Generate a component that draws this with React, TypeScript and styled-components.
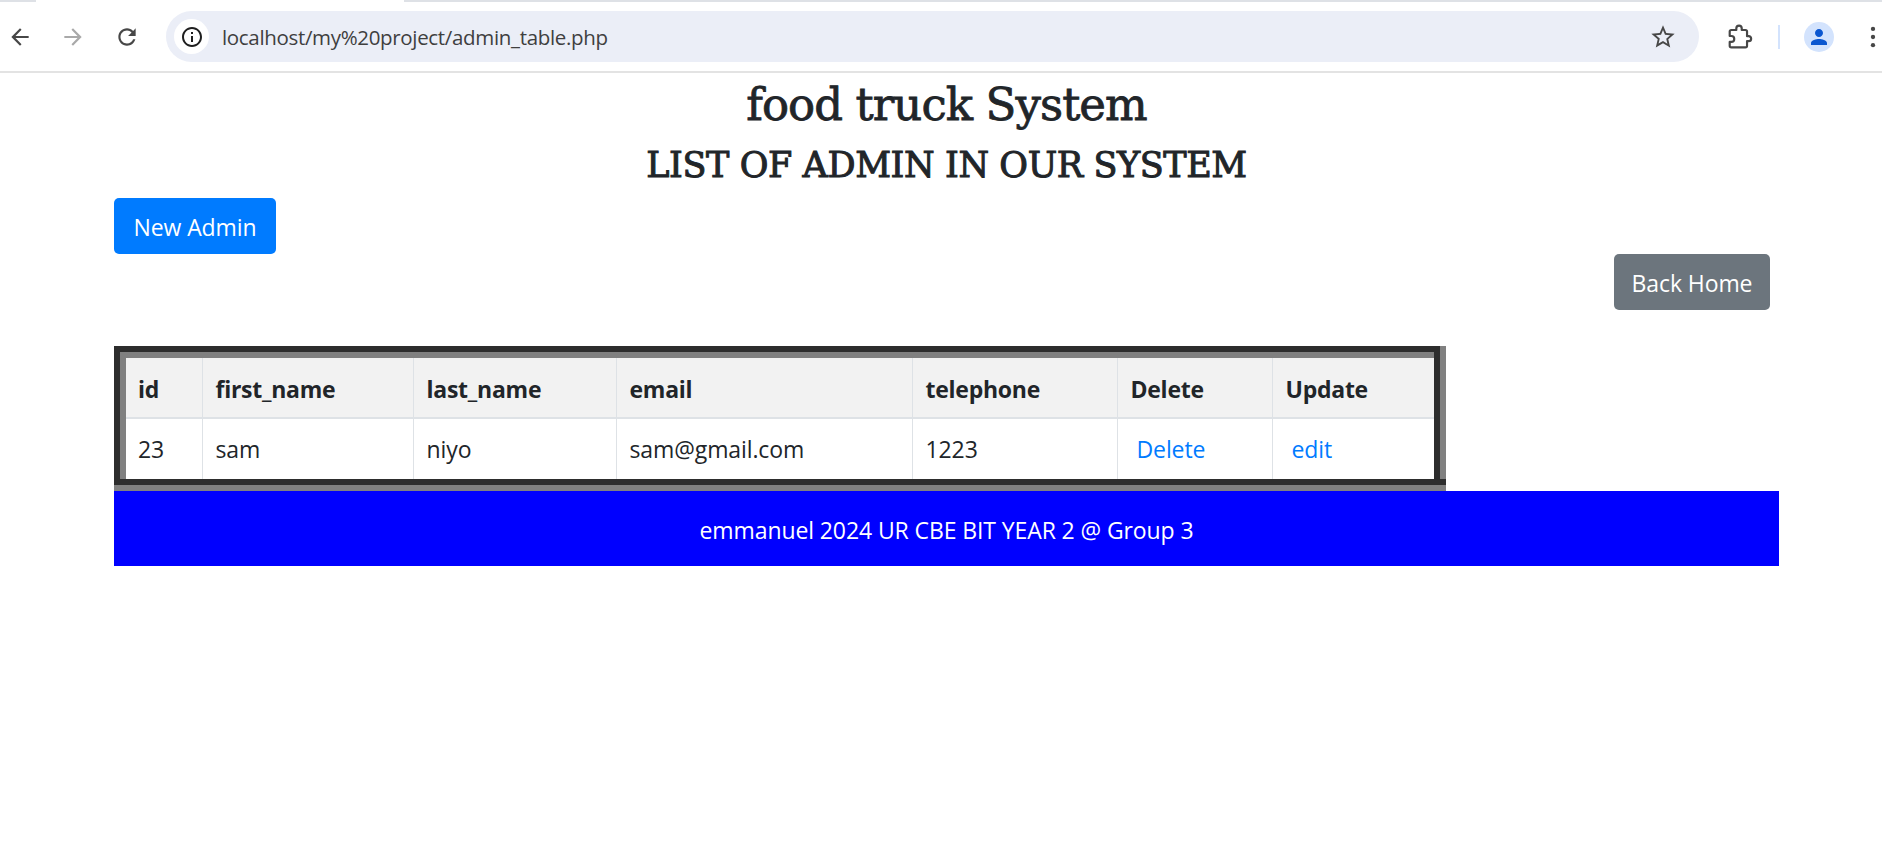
import styled, { createGlobalStyle } from "styled-components";

const GlobalStyle = createGlobalStyle`
  html, body {
    margin: 0;
    padding: 0;
    background: #fff;
    font-family: "Open Sans", "Noto Sans", sans-serif;
    color: #212529;
  }
  * {
    box-sizing: border-box;
  }
`;

const TabStrip = styled.div`
  display: flex;
  height: 2px;
  background: #dee1e6;
`;

const ActiveTab = styled.div`
  width: 368px;
  margin-left: 36px;
  background: #fff;
`;

const Toolbar = styled.div`
  display: flex;
  align-items: center;
  height: 71px;
  padding: 0 0 0 7px;
  overflow: hidden;
  border-bottom: 2px solid #e3e3e3;
`;

const NavIcon = styled.svg<{ $x: number; $color: string }>`
  width: 26px;
  height: 26px;
  flex: none;
  margin-left: ${(props) => props.$x}px;
  fill: ${(props) => props.$color};
`;

const Omnibox = styled.div`
  display: flex;
  align-items: center;
  flex: none;
  width: 1533px;
  height: 51px;
  margin-left: 26px;
  padding: 0 22px 0 8px;
  border-radius: 26px;
  background: #ebeef7;
`;

const InfoBadge = styled.div`
  display: flex;
  align-items: center;
  justify-content: center;
  width: 35px;
  height: 35px;
  flex: none;
  border-radius: 50%;
  background: #fff;
`;

const Url = styled.span`
  flex: 1;
  margin-left: 13px;
  font-size: 20.5px;
  letter-spacing: -0.33px;
  color: #3f3f3f;
`;

const Divider = styled.div`
  width: 2px;
  height: 24px;
  flex: none;
  margin-left: 25px;
  background: #d3e3fd;
`;

const Avatar = styled.div`
  display: flex;
  align-items: center;
  justify-content: center;
  width: 30px;
  height: 30px;
  flex: none;
  margin-left: 24px;
  border-radius: 50%;
  background: #d3e3fd;
`;

const Main = styled.main`
  width: 1665px;
  margin-left: 114px;
`;

const Title = styled.h1`
  margin: 0;
  height: 62px;
  padding-top: 2px;
  font-family: "DejaVu Serif", serif;
  font-weight: 400;
  -webkit-text-stroke: 0.8px #212529;
  font-size: 45px;
  line-height: 60px;
  letter-spacing: -0.9px;
  text-align: center;
`;

const Subtitle = styled.h2`
  margin: 0;
  height: 63px;
  font-family: "DejaVu Serif", serif;
  font-weight: 400;
  -webkit-text-stroke: 1px #212529;
  font-size: 35px;
  line-height: 60px;
  letter-spacing: -0.4px;
  text-align: center;
`;

const ButtonRow = styled.div<{ $end?: boolean }>`
  display: flex;
  justify-content: ${(props) => (props.$end ? "flex-end" : "flex-start")};
  padding-right: ${(props) => (props.$end ? "9px" : "0")};
`;

const Button = styled.a<{ $bg: string; $w: number }>`
  display: flex;
  align-items: center;
  justify-content: center;
  width: ${(props) => props.$w}px;
  height: 56px;
  padding-top: 2px;
  border-radius: 5px;
  background: ${(props) => props.$bg};
  color: #fff;
  font-size: 23px;
  letter-spacing: -0.1px;
`;

const dark = "linear-gradient(#2d2d2d, #2d2d2d)";

const TableFrame = styled.div`
  width: 1332px;
  margin-top: 36px;
  padding: 12px;
  background:
    ${dark} left 0 bottom 6px / 100% 6px no-repeat,
    ${dark} left 0 top 0 / calc(100% - 6px) 6px no-repeat,
    ${dark} left 0 top 0 / 6px calc(100% - 6px) no-repeat,
    ${dark} right 6px top 0 / 6px calc(100% - 6px) no-repeat,
    #808080;
`;

const Table = styled.table`
  width: 1308px;
  table-layout: fixed;
  border-collapse: collapse;
  background: #fff;
  font-size: 23px;
  letter-spacing: -0.1px;
`;

const HeadCell = styled.th`
  height: 60px;
  padding: 2px 12px 0 13px;
  background: #f2f2f2;
  border-left: 1px solid #dee2e6;
  border-bottom: 2px solid #dee2e6;
  font-weight: 700;
  letter-spacing: -0.25px;
  text-align: left;
  &:first-child {
    padding-left: 12px;
    border-left: 0;
  }
`;

const Cell = styled.td`
  height: 61px;
  padding: 0 12px 0 13px;
  border-left: 1px solid #dee2e6;
  &:first-child {
    padding-left: 12px;
    border-left: 0;
  }
`;

const RowLink = styled.a`
  padding-left: 6px;
  color: #007bff;
`;

const Footer = styled.footer`
  display: flex;
  align-items: center;
  justify-content: center;
  height: 75px;
  padding-top: 3px;
  background: #0000ff;
  color: #fff;
  font-size: 23px;
  letter-spacing: -0.1px;
`;

const columns = [
  { name: "id", width: 76 },
  { name: "first_name", width: 211 },
  { name: "last_name", width: 203 },
  { name: "email", width: 296 },
  { name: "telephone", width: 205 },
  { name: "Delete", width: 155 },
  { name: "Update", width: 162 },
];

export default function App() {
  return (
    <>
      <GlobalStyle />
      <TabStrip>
        <ActiveTab />
      </TabStrip>
      <Toolbar>
        <NavIcon $x={0} $color="#474747" viewBox="0 0 24 24">
          <path d="M20 11H7.830l5.590-5.590L12 4l-8 8 8 8 1.410-1.410L7.830 13H20v-2z" />
        </NavIcon>
        <NavIcon $x={27} $color="#a9a9a9" viewBox="0 0 24 24">
          <path d="M4 11h12.170l-5.590-5.590L12 4l8 8-8 8-1.410-1.410L16.170 13H4v-2z" />
        </NavIcon>
        <NavIcon $x={28} $color="#474747" viewBox="0 0 24 24">
          <path d="M17.650 6.350C16.200 4.900 14.210 4 12 4c-4.420 0-7.990 3.580-7.990 8s3.570 8 7.990 8c3.730 0 6.840-2.550 7.730-6h-2.080c-.820 2.330-3.040 4-5.650 4-3.310 0-6-2.690-6-6s2.690-6 6-6c1.660 0 3.140.690 4.220 1.780L13 11h7V4l-2.350 2.350z" />
        </NavIcon>
        <Omnibox>
          <InfoBadge>
            <svg width="24" height="24" viewBox="0 0 24 24" fill="#1f1f1f">
              <path d="M11 7h2v2h-2zm0 4h2v6h-2zm1-9C6.480 2 2 6.480 2 12s4.480 10 10 10 10-4.480 10-10S17.520 2 12 2zm0 18c-4.410 0-8-3.590-8-8s3.590-8 8-8 8 3.590 8 8-3.590 8-8 8z" />
            </svg>
          </InfoBadge>
          <Url>localhost/my%20project/admin_table.php</Url>
          <svg width="28" height="28" viewBox="0 0 24 24" fill="#474747">
            <path d="M22 9.240l-7.190-.620L12 2 9.190 8.630 2 9.240l5.460 4.730L5.820 21 12 17.270 18.180 21l-1.630-7.030L22 9.240zM12 15.400l-3.760 2.270 1-4.280-3.320-2.880 4.380-.380L12 6.100l1.710 4.040 4.380.380-3.320 2.880 1 4.280L12 15.400z" />
          </svg>
        </Omnibox>
        <NavIcon $x={28} $color="none" viewBox="0 0 24 24">
          <path
            stroke="#474747"
            strokeWidth="2"
            strokeLinejoin="round"
            d="M4 5.500h4.600V4a2.500 2.500 0 0 1 5 0v1.500H17a1.500 1.500 0 0 1 1.500 1.500v4.200H20a2 2 0 0 1 0 4.600h-1.500V20a1.500 1.500 0 0 1-1.500 1.500H4A1.500 1.500 0 0 1 2.500 20v-3.500H4a2.700 2.700 0 0 0 0-5.400H2.500V7A1.500 1.500 0 0 1 4 5.500z"
          />
        </NavIcon>
        <Divider />
        <Avatar>
          <svg width="24" height="24" viewBox="0 0 24 24" fill="#0b57d0">
            <path d="M12 12c2.210 0 4-1.790 4-4s-1.790-4-4-4-4 1.790-4 4 1.790 4 4 4zm0 2c-2.670 0-8 1.340-8 4v2h16v-2c0-2.660-5.330-4-8-4z" />
          </svg>
        </Avatar>
        <NavIcon $x={26} $color="#474747" viewBox="0 0 24 24">
          <circle cx="12" cy="4.500" r="2" />
          <circle cx="12" cy="12" r="2" />
          <circle cx="12" cy="19.500" r="2" />
        </NavIcon>
      </Toolbar>
      <Main>
        <Title>food truck System</Title>
        <Subtitle>LIST OF ADMIN IN OUR SYSTEM</Subtitle>
        <ButtonRow>
          <Button $bg="#007bff" $w={162}>New Admin</Button>
        </ButtonRow>
        <ButtonRow $end>
          <Button $bg="#6c757d" $w={156}>Back Home</Button>
        </ButtonRow>
        <TableFrame>
          <Table>
            <colgroup>
              {columns.map((column) => (
                <col key={column.name} width={column.width} />
              ))}
            </colgroup>
            <thead>
              <tr>
                {columns.map((column) => (
                  <HeadCell key={column.name}>{column.name}</HeadCell>
                ))}
              </tr>
            </thead>
            <tbody>
              <tr>
                <Cell>23</Cell>
                <Cell>sam</Cell>
                <Cell>niyo</Cell>
                <Cell>sam@gmail.com</Cell>
                <Cell>1223</Cell>
                <Cell><RowLink>Delete</RowLink></Cell>
                <Cell><RowLink>edit</RowLink></Cell>
              </tr>
            </tbody>
          </Table>
        </TableFrame>
        <Footer>emmanuel 2024 UR CBE BIT YEAR 2 @ Group 3</Footer>
      </Main>
    </>
  );
}
